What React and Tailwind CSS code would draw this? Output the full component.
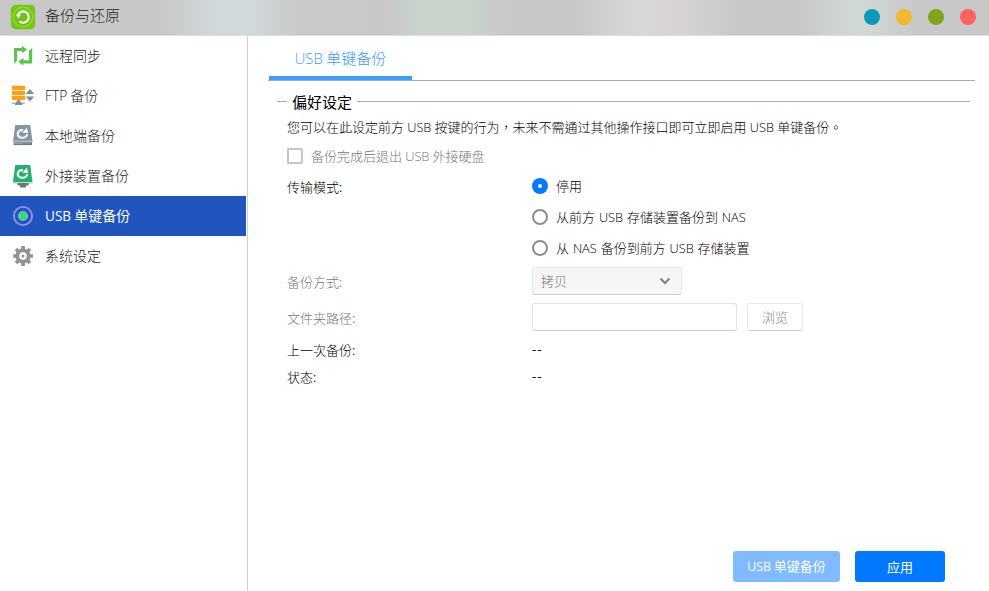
import React, { useState } from 'react';

function En({ children }) {
  return <span className="font-['Open_Sans'] text-[0.985em]">{children}</span>;
}

function AppLogo() {
  return (
    <svg width="26" height="26" viewBox="0 0 26 26" fill="none">
      <rect x="0.8" y="0.8" width="24.4" height="24.4" rx="5" fill="#74c61a" />
      <circle cx="13" cy="13" r="10.4" fill="#8fdc2c" />
      <circle cx="13" cy="13" r="8.9" fill="#6cc412" />
      <path d="M9.2 17.3A5.7 5.7 0 1 0 7.8 10.8" stroke="#fff" strokeWidth="2.1" />
      <path d="M6 10.4l5 0.4-3 3.8z" fill="#fff" />
    </svg>
  );
}

function SyncIcon() {
  return (
    <svg width="24" height="24" viewBox="0 0 24 24" fill="none">
      <path d="M3 4h8V1.7l5.2 3.7L11 9.2V7H6v9.4l-3 3.4z" fill="#5cc44e" />
      <path d="M21.2 4v15.4H12.4v2.2L7.2 17.7l5.2-3.9v2.4h5.6V6.8z" fill="#5cc44e" />
    </svg>
  );
}

function FtpIcon() {
  return (
    <svg width="24" height="24" viewBox="0 0 24 24">
      <rect x="0.8" y="1.8" width="13.4" height="4.2" rx="1" fill="#f9a11b" />
      <rect x="0.8" y="6.8" width="13.4" height="4.2" rx="1" fill="#f9a11b" />
      <rect x="0.8" y="11.8" width="13.4" height="4.2" rx="1" fill="#f9a11b" />
      <rect x="6.5" y="16" width="2.2" height="3" fill="#6d747b" />
      <rect x="0.8" y="18.4" width="13" height="1.6" fill="#b3b8bb" />
      <path d="M5.6 17.6h4l2 3.4H3.8z" fill="#858c92" />
      <path d="M18.9 5l4.3 5H14.6z" fill="#7f8d99" />
      <path d="M14.6 12.6h8.6l-4.3 5z" fill="#7f8d99" />
    </svg>
  );
}

function DiskArrow() {
  return (
    <g transform="translate(-0.6 1) scale(1.06)">
      <path d="M12 4.9C8.6 4.5 6.6 6.6 6.9 8.9c0.3 2.7 4.4 3.9 7 2.5 1.1-0.6 1.9-1.5 2-2.7" fill="none" stroke="#fff" strokeWidth="2" />
      <path d="M11.3 7.6h5.6L15.4 2.4z" fill="#fff" />
    </g>
  );
}

function LocalIcon() {
  return (
    <svg width="24" height="24" viewBox="0 0 24 24">
      <path d="M4.2 1h15l2.3 16.5H2z" fill="#8595a3" />
      <path d="M2 16.7h19.5v1.5H2z" fill="#b6c0c8" />
      <rect x="2.6" y="18.2" width="18.4" height="2.9" fill="#6f7a83" />
      <path d="M3.6 19.6h8.4M14 19.6h1.4M16.6 19.6H18" stroke="#c4cbd0" strokeWidth="0.5" />
      <DiskArrow />
    </svg>
  );
}

function ExternalIcon() {
  return (
    <svg width="24" height="24" viewBox="0 0 24 24">
      <path d="M4.2 1h15l2.3 17H2z" fill="#20b26b" />
      <path d="M2 18h19.5v1.8H2z" fill="#c3ddd0" />
      <path d="M6.5 19h11v2.4h-2.6v2H9.1v-2H6.5z" fill="#6d7474" />
      <DiskArrow />
    </svg>
  );
}

function UsbIcon() {
  return (
    <svg width="24" height="24" viewBox="0 0 24 24">
      <circle cx="12" cy="12" r="9.1" fill="none" stroke="#9c8ff0" strokeWidth="1.9" />
      <circle cx="12" cy="12" r="4.4" fill="#35e065" stroke="#72b8ea" strokeWidth="1.3" />
    </svg>
  );
}

function GearIcon() {
  return (
    <svg width="24" height="24" viewBox="0 0 24 24">
      <g stroke="#929292" strokeWidth="3.6">
        <path d="M12 2.1v19.8M2.1 12h19.8M5 5l14 14M19 5L5 19" />
      </g>
      <circle cx="12" cy="12" r="7.6" fill="#929292" />
      <circle cx="12" cy="12" r="3.8" fill="#fff" />
      <circle cx="12" cy="12" r="1.5" fill="#929292" />
    </svg>
  );
}

const menu = [
  { id: 'rsync', icon: SyncIcon, label: '远程同步' },
  { id: 'ftp', icon: FtpIcon, label: <><En>FTP</En> 备份</> },
  { id: 'local', icon: LocalIcon, label: '本地端备份' },
  { id: 'external', icon: ExternalIcon, label: '外接装置备份' },
  { id: 'usb', icon: UsbIcon, label: <><span className="font-['Open_Sans'] text-[0.97em]">USB</span> 单键备份</> },
  { id: 'settings', icon: GearIcon, label: '系统设定' },
];

const modes = [
  { id: 'off', label: '停用' },
  { id: 'toNas', label: <>从前方 <En>USB</En> 存储装置备份到 <En>NAS</En></> },
  { id: 'fromNas', label: <>从 <En>NAS</En> 备份到前方 <En>USB</En> 存储装置</> },
];

function Radio({ checked, label, onClick }) {
  return (
    <button onClick={onClick} className="flex h-[31px] items-center gap-2">
      {checked ? (
        <span className="flex size-4 items-center justify-center rounded-full bg-[#0078ff]">
          <span className="size-1 rounded-full bg-white" />
        </span>
      ) : (
        <span className="size-4 rounded-full border-2 border-[#8e8e8e] bg-white" />
      )}
      <span className="[word-spacing:1px]">{label}</span>
    </button>
  );
}

function App() {
  const [active, setActive] = useState('usb');
  const [mode, setMode] = useState('off');
  const disabled = mode === 'off';

  return (
    <div className="flex h-[591px] w-[989px] flex-col overflow-hidden bg-white font-['Noto_Sans_CJK_TC',sans-serif] text-[13px] leading-5 font-light text-black [word-spacing:0.3px]">
      {/* Title bar */}
      <header className="flex h-9 shrink-0 items-center border-b border-[#dedede] bg-[linear-gradient(90deg,#c8c8c8_0,#c8c8c8_165px,#d1dadb_220px,#d1d9da_250px,#c9c9c9_295px,#c8c8c8_385px,#c8d4cc_425px,#c8d4cc_460px,#c9c8c8_510px,#c8c8c8_575px,#dad8d7_640px,#d6d3d2_680px,#c8c8c8_740px,#c8c8c8_800px,#d0d9d7_850px,#d0d6d4_870px,#c8c8c8_915px,#c8c8c8_989px)] pr-[13px] pb-[2px] pl-2.5">
        <AppLogo />
        <h1 className="mb-[3px] ml-[9px] text-[15px] text-[#222]">备份与还原</h1>
        <div className="ml-auto flex gap-4">
          <span className="size-4 rounded-full bg-[#0c99b9]" />
          <span className="size-4 rounded-full bg-[#f2b72e]" />
          <span className="size-4 rounded-full bg-[#82a31c]" />
          <span className="size-4 rounded-full bg-[#ff625f]" />
        </div>
      </header>

      <div className="flex min-h-0 flex-1">
        {/* Sidebar */}
        <nav className="w-[248px] shrink-0 border-r border-[#cfcfcf] pr-px">
          {menu.map(({ id, icon: Icon, label }) => (
            <button
              key={id}
              onClick={() => setActive(id)}
              className={`flex h-10 w-full items-center gap-[10px] pl-[11px] text-[14px] ${
                active === id ? 'bg-[#2055c0] font-normal text-white' : 'text-[#222]'
              }`}
            >
              <Icon />
              <span className="mb-0.5">{label}</span>
            </button>
          ))}
        </nav>

        {/* Content */}
        <main className="flex min-w-0 flex-1 flex-col pr-[14px] pl-5">
          <div className="flex h-[45px] shrink-0 border-b border-[#acacac] pl-px">
            <div className="h-[44px] w-[143px] border-b-4 border-[#3a9dff] pt-3 text-center text-[15px] text-[#3a9dff]">
              <En>USB</En> 单键备份
            </div>
          </div>

          <section className="pr-[5px] pl-[9px]">
            <div className="mt-[9px] flex h-[22px] items-center">
              <span className="h-px w-[10px] bg-[#acacac]" />
              <h2 className="mt-0.5 mr-[5px] ml-[5px] text-[15px] font-normal">偏好设定</h2>
              <span className="h-px flex-1 bg-[#acacac]" />
            </div>

            <div className="pl-[10px]">
              <p className="mt-[5px] whitespace-nowrap">
                您可以在此设定前方 <En>USB</En> 按键的行为，未来不需通过其他操作接口即可立即启用 <En>USB</En> 单键备份。
              </p>
              <div className="mt-[9px] flex items-center gap-2 text-[#777]">
                <span className="size-4 rounded-[1px] border-2 border-[#c6c6c6]" />
                <span>备份完成后退出 <En>USB</En> 外接硬盘</span>
              </div>

              <div className="mt-1 flex">
                <div className="w-[245px] pt-[7px]">传输模式:</div>
                <div>
                  {modes.map((m) => (
                    <Radio key={m.id} checked={mode === m.id} label={m.label} onClick={() => setMode(m.id)} />
                  ))}
                </div>
              </div>

              <div className="mt-1 flex h-7 items-center">
                <div className={`w-[245px] pt-0.5 ${disabled ? 'text-[#777]' : ''}`}>备份方式:</div>
                <div className="flex h-7 w-[150px] items-center justify-between rounded-[3px] border border-[#e6e6e6] border-b-[#cfcfcf] bg-[#f6f6f6] pr-[10px] pl-2 text-[#777]">
                  <span>拷贝</span>
                  <svg width="12" height="8" viewBox="0 0 12 8" fill="none">
                    <path d="M1.5 1.5L6 6l4.5-4.5" stroke="#808080" strokeWidth="2" />
                  </svg>
                </div>
              </div>

              <div className="mt-2 flex h-7 items-center">
                <div className={`w-[245px] pt-0.5 ${disabled ? 'text-[#777]' : ''}`}>文件夹路径:</div>
                <div className="h-7 w-[205px] rounded-[3px] border border-[#e4e4e4] border-b-[#cfcfcf]" />
                <button className="ml-[10px] h-7 w-14 rounded-[3px] border border-[#e8e8e8] border-b-[#cfcfcf] text-[#888]">浏览</button>
              </div>

              <div className="mt-[9px] flex">
                <div className="w-[245px]">上一次备份:</div>
                <div className="-mt-px font-normal tracking-[0.7px]">--</div>
              </div>
              <div className="mt-[7px] flex">
                <div className="w-[245px]">状态:</div>
                <div className="-mt-px font-normal tracking-[0.7px]">--</div>
              </div>
            </div>
          </section>

          <div className="mt-auto mb-[9px] flex justify-end gap-[15px] pr-[30px] font-normal text-white">
            <button className="h-[31px] w-[107px] rounded-[3px] bg-[#80bbff]">
              <span className="font-['Open_Sans'] text-[0.95em]">USB</span> 单键备份
            </button>
            <button className="h-[31px] w-[90px] rounded-[3px] bg-[#0078ff]">应用</button>
          </div>
        </main>
      </div>
    </div>
  );
}

export default App;
